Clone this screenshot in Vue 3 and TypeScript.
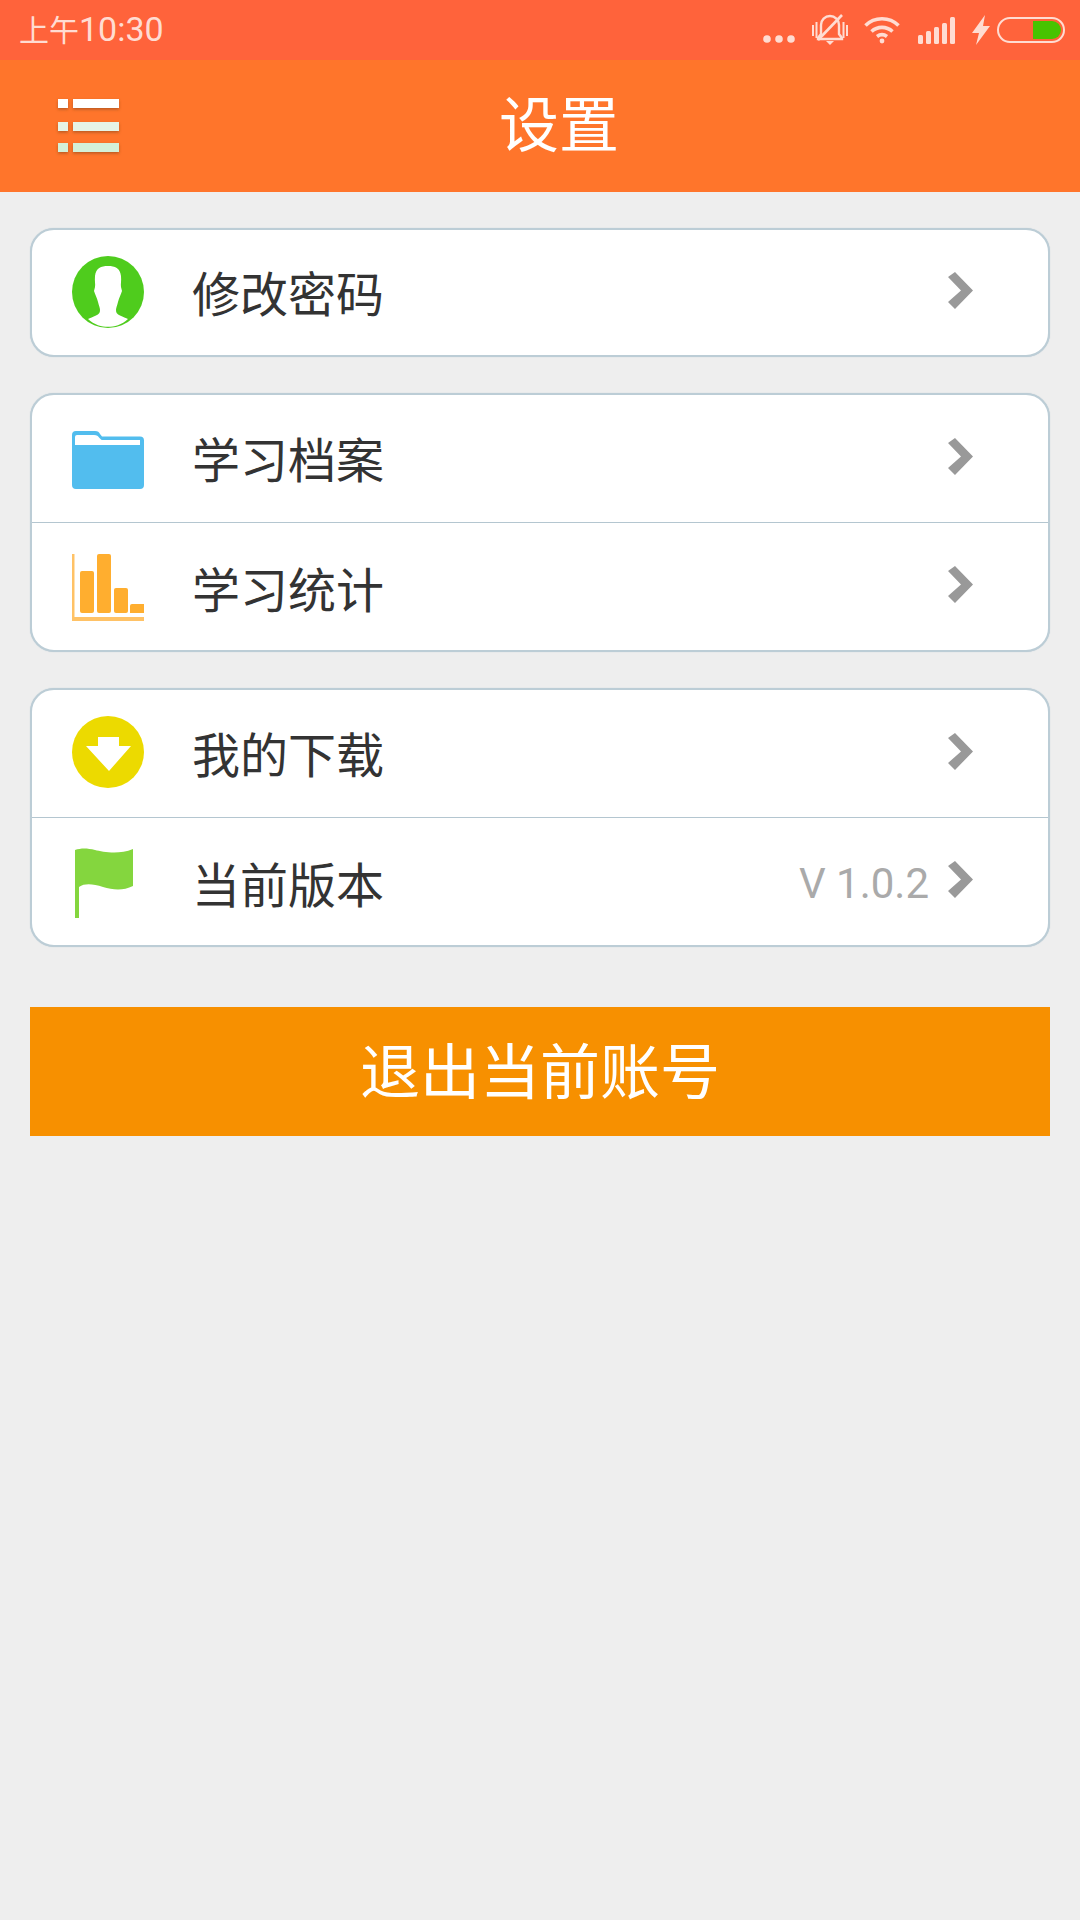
<script setup lang="ts">
interface Row { label: string; icon: string; value?: string }
const groups: Row[][] = [
  [{ label: '修改密码', icon: 'user' }],
  [{ label: '学习档案', icon: 'folder' }, { label: '学习统计', icon: 'chart' }],
  [{ label: '我的下载', icon: 'download' }, { label: '当前版本', icon: 'flag', value: 'V 1.0.2' }],
]
</script>

<template>
  <div class="page">
    <div class="status">
      <span class="time"><span class="time-cjk">上午</span>10:30</span>
      <div class="status-icons">
        <svg class="dots" width="32" height="8" viewBox="0 0 32 8"><circle cx="4" cy="4" r="3.8"/><circle cx="16" cy="4" r="3.8"/><circle cx="28" cy="4" r="3.8"/></svg>
        <svg class="bell" width="36" height="32" viewBox="0 0 36 32">
          <path d="M18 2a9 9 0 0 0-9 9v9l-3 4v1h24v-1l-3-4v-9a9 9 0 0 0-9-9Z" fill="none" stroke="#ffdcd2" stroke-width="2.4"/>
          <path d="M14 27h8l-4 4Z" fill="#ffdcd2"/>
          <path d="M6 26 30 1" stroke="#ffdcd2" stroke-width="2.6"/>
          <path d="M1 11v11M4.500 8v16M31.500 8v16M35 11v11" stroke="#ffdcd2" stroke-width="2"/>
        </svg>
        <svg class="wifi" width="36" height="28" viewBox="0 0 36 28" fill="none" stroke="#ffdcd2" stroke-width="3.600">
          <path d="M1.500 9.500C10.500 .5 25.500 .5 34.500 9.500"/>
          <path d="M7.500 15.500c6-5.500 15-5.500 21 0"/>
          <path d="M13 20.500c3-2.200 7-2.200 10 0"/>
          <circle cx="18" cy="25" r="2.400" fill="#ffdcd2" stroke="none"/>
        </svg>
        <svg class="signal" width="37" height="27" viewBox="0 0 37 27" fill="#ffdcd2">
          <rect x="0" y="18" width="5" height="9" rx="1.500"/><rect x="8" y="14" width="5" height="13" rx="1.500"/><rect x="16" y="10" width="5" height="17" rx="1.500"/><rect x="24" y="6" width="5" height="21" rx="1.500"/><rect x="32" y="0" width="5" height="27" rx="1.500"/>
        </svg>
        <svg class="bolt" width="18" height="30" viewBox="0 0 18 30"><path d="M13 0 0 18h7L4 30l14-19h-7Z" fill="#ffdcd2"/></svg>
        <div class="battery"><span class="charge"></span></div>
      </div>
    </div>

    <header class="bar">
      <svg class="menu" width="64" height="60" viewBox="0 0 64 60">
        <defs>
          <filter id="sh" x="-10%" y="-20%" width="120%" height="160%"><feDropShadow dx="0" dy="1.500" stdDeviation="1.500" flood-color="#8a4a20" flood-opacity=".6"/></filter>
        </defs>
        <g filter="url(#sh)">
          <rect x="0" y="0" width="10" height="9" fill="#fff"/><rect x="15" y="0" width="46" height="9" fill="#fff"/>
          <rect x="0" y="23" width="10" height="9" fill="#e6f4e6"/><rect x="15" y="23" width="46" height="9" fill="#e6f4e6"/>
          <rect x="0" y="44" width="10" height="9" fill="#d4f0d8"/><rect x="15" y="44" width="46" height="9" fill="#d4f0d8"/>
        </g>
      </svg>
      <h1 class="title">设置</h1>
    </header>

    <main class="content">
      <section v-for="(group, g) in groups" :key="g" class="card">
        <div v-for="row in group" :key="row.label" class="row">
          <div class="icon" :class="'icon-' + row.icon">
            <svg v-if="row.icon === 'user'" width="72" height="72" viewBox="0 0 72 72">
              <circle cx="36" cy="36" r="36" fill="#4fcc1d"/>
              <path d="M36 10C29 10 24 12 23 20C22.500 25 23.500 28 23 31L22 35C23 38 25 42 26 46C27 50 28 52 28 54C28 57 27 58 24 59.500C21 61 18 62 16 63C22 69 30 70.800 36 70.800C42 70.800 50 69 56 63C54 62 51 61 48 59.500C45 58 44 57 44 54C44 52 45 50 46 46C47 42 49 38 50 35L49 31C48.500 28 49.500 25 49 20C48 12 43 10 36 10Z" fill="#fff"/>
            </svg>
            <svg v-else-if="row.icon === 'folder'" width="72" height="58" viewBox="0 0 72 58">
              <path d="M4 0h19c3 0 4 1 5 3l2 2.500h38a4 4 0 0 1 4 4V54a4 4 0 0 1-4 4H4a4 4 0 0 1-4-4V4a4 4 0 0 1 4-4Z" fill="#52bdee"/>
              <path d="M3 14V6a2 2 0 0 1 2-2h17c3 0 4 1 5 2.500l2 2c.5.5 1 .5 2 .5h37v5Z" fill="#fff"/>
            </svg>
            <svg v-else-if="row.icon === 'chart'" width="72" height="68" viewBox="0 0 72 68" fill="#ffae2f">
              <path d="M0 0h2.500v63H72v4H0Z" fill="#ffc266"/>
              <rect x="8" y="17" width="14" height="42" rx="2"/>
              <rect x="25" y="0" width="14" height="59" rx="2"/>
              <rect x="42" y="34" width="14" height="25" rx="2"/>
              <path d="M58 52a2 2 0 0 1 2-2h12v9H58Z"/>
            </svg>
            <svg v-else-if="row.icon === 'download'" width="72" height="72" viewBox="0 0 72 72">
              <circle cx="36" cy="36" r="36" fill="#ecda00"/>
              <path d="M26 21h21v9h12L37 55 14 30h12Z" fill="#fff"/>
            </svg>
            <svg v-else width="59" height="70" viewBox="0 0 59 70">
              <path d="M0 2C6 0 12 0 20 2S44 7 58 1V38C48 43 38 42 28 39S10 35 4 39V70H0Z" fill="#84d63e"/>
            </svg>
          </div>
          <span class="label">{{ row.label }}</span>
          <span v-if="row.value" class="value">{{ row.value }}</span>
          <svg class="chev" width="26" height="38" viewBox="0 0 26 38"><path d="M0 5 7 0 25 18.500 7 37 0 30 13 18.500Z" fill="#999"/></svg>
        </div>
      </section>
      <button class="logout" type="button">退出当前账号</button>
    </main>
  </div>
</template>

<style scoped>
.page {
  width: 1080px;
  height: 1920px;
  background: #eee;
  font-family: "Noto Sans CJK SC", "Noto Sans", sans-serif;
  display: flex;
  flex-direction: column;
}
.status {
  height: 60px;
  background: #ff633b;
  display: flex;
  align-items: center;
  justify-content: space-between;
  padding: 0 15px 0 19px;
  box-sizing: border-box;
}
.time {
  font-family: Roboto, "Noto Sans CJK SC", sans-serif;
  font-size: 34px;
  color: #ffdcd2;
  line-height: 60px;
}
.time-cjk {
  font-size: 30px;
}
.status-icons { display: flex; align-items: center; height: 60px; }
.status-icons svg { display: block; flex: none; }
.dots { fill: #ffdcd2; margin-top: 18px; margin-right: 17px; }
.bell { margin-right: 16px; margin-top: -1px; }
.wifi { margin-right: 18px; }
.signal { margin-right: 17px; }
.bolt { margin-right: 7px; margin-top: -1px; }
.battery {
  width: 68px;
  height: 26px;
  box-sizing: border-box;
  border: 2px solid #ffdcd2;
  border-radius: 13px;
  display: flex;
  justify-content: flex-end;
  padding: 2px;
}
.charge {
  width: 28px;
  height: 18px;
  background: #47c300;
  border-radius: 0 9px 9px 0;
}
.bar {
  height: 132px;
  background: #ff752b;
  display: flex;
  align-items: center;
  padding-left: 58px;
  box-sizing: border-box;
}
.menu { display: block; margin-top: 6px; overflow: visible; flex: none; }
.title {
  margin: 0 0 11px 377px;
  font-size: 60px;
  font-weight: 400;
  line-height: 1;
  color: #fff;
  white-space: nowrap;
}
.content {
  padding: 36px 30px 0;
  display: flex;
  flex-direction: column;
  gap: 36px;
}
.card {
  background: #fff;
  border: 2px solid #bccdd6;
  border-radius: 24px;
  overflow: hidden;
  box-shadow: 0 0 1px #b4c6d0;
}
.row {
  height: 127px;
  display: flex;
  align-items: center;
  padding-left: 40px;
  padding-right: 74px;
}
.row:only-child { height: 125px; }
.row + .row { border-top: 1px solid #b4c6d0; }
.icon {
  width: 72px;
  display: flex;
  justify-content: center;
  flex: none;
}
.icon svg { display: block; }
.icon-user { margin-top: -1px; }
.icon-folder, .icon-chart { margin-top: 3px; }
.icon-download { margin-top: -3px; }
.icon-flag { margin-top: 3px; justify-content: flex-start; padding-left: 3px; box-sizing: border-box; }
.label {
  margin-left: 48px;
  font-size: 48px;
  color: #333;
  flex: 1;
  line-height: 1;
  padding-bottom: 4px;
}
.row + .row .label { padding-bottom: 0; }
.value {
  font-family: Roboto, sans-serif;
  font-size: 42px;
  color: #aaa;
  margin-right: 19px;
  padding-top: 4px;
}
.chev { display: block; flex: none; margin-top: -4px; }
.logout {
  margin-top: 24px;
  height: 129px;
  border: 0;
  background: #f79000;
  color: #fff;
  font-family: inherit;
  font-size: 60px;
  padding: 0 0 9px;
}
</style>

<style>
html, body { margin: 0; background: #eee; }
</style>
